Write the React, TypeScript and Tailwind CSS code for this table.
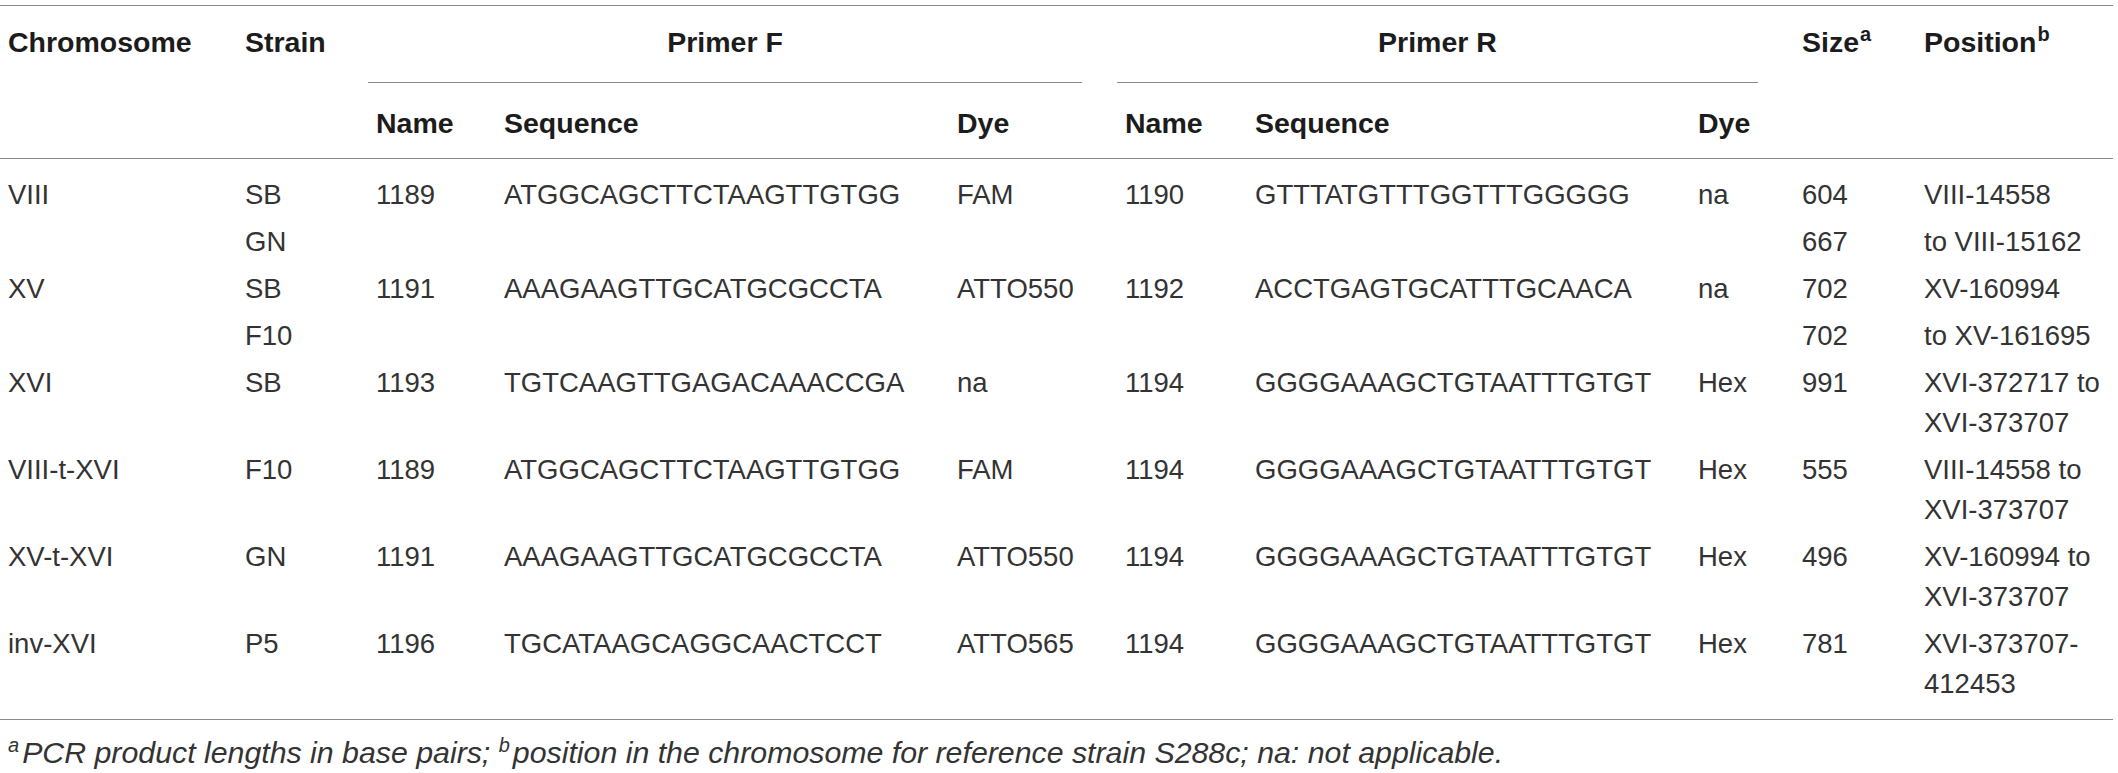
import React from "react";

type Row = {
  chr: string;
  strain: string;
  fName: string;
  fSeq: string;
  fDye: string;
  rName: string;
  rSeq: string;
  rDye: string;
  size: string;
  pos: string[];
};

const rows: Row[] = [
  { chr: "VIII", strain: "SB", fName: "1189", fSeq: "ATGGCAGCTTCTAAGTTGTGG", fDye: "FAM", rName: "1190", rSeq: "GTTTATGTTTGGTTTGGGGG", rDye: "na", size: "604", pos: ["VIII-14558"] },
  { chr: "", strain: "GN", fName: "", fSeq: "", fDye: "", rName: "", rSeq: "", rDye: "", size: "667", pos: ["to VIII-15162"] },
  { chr: "XV", strain: "SB", fName: "1191", fSeq: "AAAGAAGTTGCATGCGCCTA", fDye: "ATTO550", rName: "1192", rSeq: "ACCTGAGTGCATTTGCAACA", rDye: "na", size: "702", pos: ["XV-160994"] },
  { chr: "", strain: "F10", fName: "", fSeq: "", fDye: "", rName: "", rSeq: "", rDye: "", size: "702", pos: ["to XV-161695"] },
  { chr: "XVI", strain: "SB", fName: "1193", fSeq: "TGTCAAGTTGAGACAAACCGA", fDye: "na", rName: "1194", rSeq: "GGGGAAAGCTGTAATTTGTGT", rDye: "Hex", size: "991", pos: ["XVI-372717 to", "XVI-373707"] },
  { chr: "VIII-t-XVI", strain: "F10", fName: "1189", fSeq: "ATGGCAGCTTCTAAGTTGTGG", fDye: "FAM", rName: "1194", rSeq: "GGGGAAAGCTGTAATTTGTGT", rDye: "Hex", size: "555", pos: ["VIII-14558 to", "XVI-373707"] },
  { chr: "XV-t-XVI", strain: "GN", fName: "1191", fSeq: "AAAGAAGTTGCATGCGCCTA", fDye: "ATTO550", rName: "1194", rSeq: "GGGGAAAGCTGTAATTTGTGT", rDye: "Hex", size: "496", pos: ["XV-160994 to", "XVI-373707"] },
  { chr: "inv-XVI", strain: "P5", fName: "1196", fSeq: "TGCATAAGCAGGCAACTCCT", fDye: "ATTO565", rName: "1194", rSeq: "GGGGAAAGCTGTAATTTGTGT", rDye: "Hex", size: "781", pos: ["XVI-373707-", "412453"] },
];

function Cell({ children }: { children?: React.ReactNode }) {
  return (
    <div className="pl-2 py-[3.5px] text-[27.5px] leading-[40px] whitespace-nowrap">{children}</div>
  );
}

const head = "text-[28.5px] leading-[40px] font-bold text-[#1c1c1c]";

export default function App() {
  return (
    <div className="min-h-screen bg-white pt-[5px] font-['Liberation_Sans',Arial,sans-serif] text-[#333]">
      <div className="w-[2113px]">
        <div className="h-px bg-[#8a8a8a]" />

        <div className="grid grid-cols-[237px_131px_128px_453px_168px_130px_443px_104px_122px_197px]">
          {/* header, first line */}
          <div className={`row-span-2 pl-2 pt-[16px] ${head}`}>Chromosome</div>
          <div className={`row-span-2 pl-2 pt-[16px] ${head}`}>Strain</div>
          <div className="col-span-3 pr-[35px]">
            <div className={`pt-[16px] pb-[20px] border-b border-[#8a8a8a] text-center ${head}`}>Primer F</div>
          </div>
          <div className="col-span-3 pr-[36px]">
            <div className={`pt-[16px] pb-[20px] border-b border-[#8a8a8a] text-center ${head}`}>Primer R</div>
          </div>
          <div className={`row-span-2 pl-2 pt-[16px] whitespace-nowrap ${head}`}>
            Size<sup className="text-[20px] -top-[11px] ml-px">a</sup>
          </div>
          <div className={`row-span-2 pl-2 pt-[16px] whitespace-nowrap ${head}`}>
            Position<sup className="text-[20px] -top-[11px] ml-px">b</sup>
          </div>

          {/* header, second line */}
          {["Name", "Sequence", "Dye", "Name", "Sequence", "Dye"].map((h, i) => (
            <div key={i} className={`pl-2 pt-[20px] pb-[15px] ${head}`}>
              {h}
            </div>
          ))}

          <div className="col-span-10 h-px bg-[#8a8a8a]" />
          <div className="col-span-10 h-[12px]" />

          {rows.map((r, i) => (
            <React.Fragment key={i}>
              <Cell>{r.chr}</Cell>
              <Cell>{r.strain}</Cell>
              <Cell>{r.fName}</Cell>
              <Cell>{r.fSeq}</Cell>
              <Cell>{r.fDye}</Cell>
              <Cell>{r.rName}</Cell>
              <Cell>{r.rSeq}</Cell>
              <Cell>{r.rDye}</Cell>
              <Cell>{r.size}</Cell>
              <Cell>
                {r.pos.map((p, j) => (
                  <div key={j}>{p}</div>
                ))}
              </Cell>
            </React.Fragment>
          ))}

          <div className="col-span-10 h-[12px]" />
          <div className="col-span-10 h-px bg-[#8a8a8a]" />
        </div>

        <p className="pl-2 pt-[15px] text-[30.3px] leading-[36px] italic whitespace-nowrap">
          <sup className="text-[20px] -top-[11px] mr-[3px]">a</sup>PCR product lengths in base pairs;{" "}
          <sup className="text-[20px] -top-[11px] mr-[3px]">b</sup>position in the chromosome for reference strain S288c; na: not applicable.
        </p>
      </div>
    </div>
  );
}
